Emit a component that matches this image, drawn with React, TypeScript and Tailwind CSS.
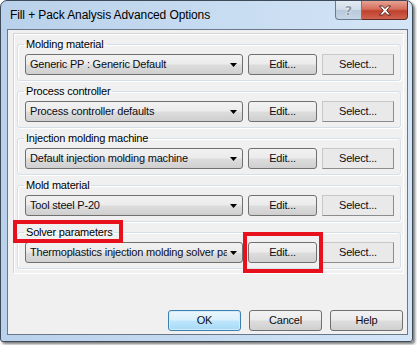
import React from 'react'

const groups = [
  { label: 'Molding material', value: 'Generic PP : Generic Default' },
  { label: 'Process controller', value: 'Process controller defaults' },
  { label: 'Injection molding machine', value: 'Default injection molding machine' },
  { label: 'Mold material', value: 'Tool steel P-20' },
  { label: 'Solver parameters', value: 'Thermoplastics injection molding solver parameters' },
]

const btnFace =
  'bg-[linear-gradient(#f2f2f2_0%,#ebebeb_48%,#dddddd_52%,#cfcfcf_100%)] border border-[#707070] rounded-[3px]'

function Combo({ value }: { value: string }) {
  return (
    <div className={`${btnFace} h-[21px] w-[218px] flex items-center pl-[4px] pr-[5px]`}>
      <span className="flex-1 overflow-hidden whitespace-nowrap">{value}</span>
      <svg width="7" height="4" viewBox="0 0 7 4" className="ml-[3px] shrink-0">
        <path d="M0 0h7L3.5 4z" fill="#000" />
      </svg>
    </div>
  )
}

function GroupBox({ label, value }: { label: string; value: string }) {
  return (
    <fieldset className="border border-[#d5dfe5] rounded-[3px] shadow-[inset_1px_1px_0_#fff,1px_1px_0_#fff] px-[6px] pb-[5px]">
      <legend className="ml-0 px-[2px] leading-[14px] text-black">{label}</legend>
      <div className="flex items-center gap-[5px] pt-[3px] pl-[1px]">
        <Combo value={value} />
        <button className={`${btnFace} h-[21px] w-[69px]`}>Edit...</button>
        <button className="h-[21px] w-[72px] bg-[#e9e9e9] border border-[#c8c8c8] border-r-[#8c8c8c] border-b-[#8c8c8c]">
          Select...
        </button>
      </div>
    </fieldset>
  )
}

export default function App() {
  return (
    <div className="w-[417px] h-[345px] bg-white font-['Liberation_Sans',Arial,sans-serif] text-[11px] tracking-[-0.2px] text-[#0c0c14] overflow-hidden">
      <div className="w-[413px] h-[342px] rounded-t-[7px] rounded-b-[3px] border border-[#3d4a5a] bg-[linear-gradient(90deg,#b9d1ea,#c9ddf2_60%,#d4e5f6)] shadow-[2px_2px_3px_rgba(0,0,0,0.55)] flex flex-col">
        {/* Title bar */}
        <div className="h-[28px] flex items-start">
          <span className="pl-[9px] pt-[7px] leading-[15px] text-[12px] tracking-[-0.1px] text-black">
            Fill + Pack Analysis Advanced Options
          </span>
          <div className="ml-auto mr-[4px] flex">
            <div className="w-[27px] h-[19px] rounded-bl-[4px] border border-t-0 border-[#6b7c8f] bg-[linear-gradient(#e3ebf4_0%,#cfdbe8_48%,#b7c8da_52%,#c6d6e6_100%)] flex items-center justify-center">
              <span className="font-['DejaVu_Sans',sans-serif] font-bold text-[13px] leading-none text-[#8d9aa8] [text-shadow:0_0_2px_#fff,0_0_1px_#fff]">?</span>
            </div>
            <div className="w-[46px] h-[19px] rounded-br-[4px] border border-l-0 border-t-0 border-[#5e2a25] bg-[linear-gradient(#e8a294_0%,#d46e5c_45%,#c0402e_55%,#d0634f_100%)] flex items-center justify-center">
              <svg width="14" height="11" viewBox="0 0 14 11">
                <path
                  d="M1.5 1h3L7 3.6 9.5 1h3L8.7 5.5 12.5 10h-3L7 7.4 4.5 10h-3l3.8-4.5z"
                  fill="#fff"
                  stroke="#4a1a14"
                  strokeWidth="0.9"
                  strokeLinejoin="round"
                />
              </svg>
            </div>
          </div>
        </div>

        {/* Client area */}
        <div className="relative ml-[6px] mr-[4px] mb-[6px] flex-1 border border-[#68788a] bg-[#f0f0f0] flex flex-col">
          <div className="mt-[3px] ml-[5px] mr-[3px] border border-[#d3d3d3] border-r-white border-b-white shadow-[inset_1px_1px_0_#fff] pt-[3px] px-[3px] pb-[4px] flex flex-col gap-[3px]">
            {groups.map((g) => (
              <GroupBox key={g.label} label={g.label} value={g.value} />
            ))}
          </div>

          <div className="mt-auto mb-[3px] mr-[4px] flex justify-end gap-[8px]">
            <button className="h-[21px] w-[73px] rounded-[3px] border border-[#3c7fb1] bg-[linear-gradient(#eaf6fd_0%,#d9f0fc_48%,#bee6fd_52%,#a7d9f5_100%)] shadow-[inset_0_0_0_1px_#d3ecfb]">
              OK
            </button>
            <button className={`${btnFace} h-[21px] w-[73px]`}>Cancel</button>
            <button className={`${btnFace} h-[21px] w-[73px]`}>Help</button>
          </div>

          {/* Annotation boxes */}
          <div className="absolute left-[5px] top-[190px] w-[110px] h-[23px] border-[4px] border-[#e8101c]" />
          <div className="absolute left-[235px] top-[202px] w-[80px] h-[41px] border-[4px] border-[#e8101c]" />
        </div>
      </div>
    </div>
  )
}
